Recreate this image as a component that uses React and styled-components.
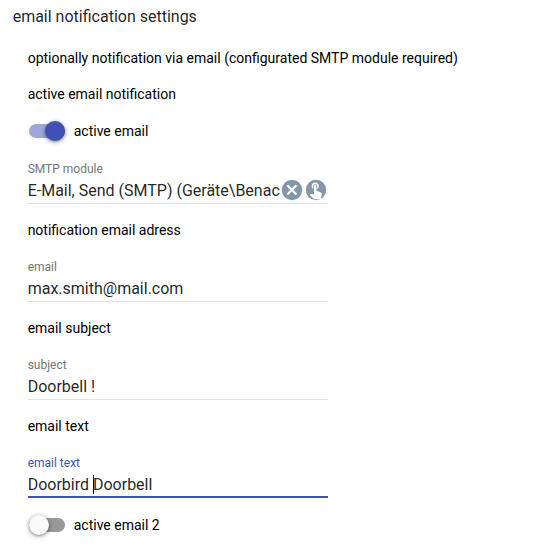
import React from "react";
import styled, { createGlobalStyle } from "styled-components";

const GlobalStyle = createGlobalStyle`
  body { margin: 0; background: #fff; font-family: Roboto, sans-serif; color: rgba(0,0,0,0.87); }
`;
const Page = styled.main`
  box-sizing: border-box;
  height: 547px;
  padding: 7px 0 0 27.65px;
  overflow: hidden;
`;
const Title = styled.h1`
  margin: 0 0 0 -15px;
  font-size: 16px;
  font-weight: 400;
  line-height: 20px;
`;
const Text = styled.p`
  margin: ${(p) => p.$top}px 0 0;
  font-size: 14px;
  line-height: 20px;
  color: #000;
`;
const SwitchRow = styled.label`
  display: flex;
  align-items: center;
  gap: 8.75px;
  height: 20px;
  margin-top: ${(p) => p.$top}px;
  font-size: 14px;
  color: #000;
`;
const Track = styled.span`
  box-sizing: border-box;
  display: flex;
  align-items: center;
  justify-content: ${(p) => (p.$on ? "flex-end" : "flex-start")};
  width: 36px;
  height: 14px;
  margin-left: 1.35px;
  border-radius: 8px;
  background: ${(p) => (p.$on ? "#9fa8da" : "#999")};
`;
const Thumb = styled.span`
  flex: none;
  width: 20px;
  height: 20px;
  border-radius: 50%;
  background: ${(p) => (p.$on ? "#3f51b5" : "#fafafa")};
  box-shadow: 0 1px 5px rgba(0,0,0,.4), 0 1px 2px rgba(0,0,0,.2);
`;
const Field = styled.div`
  box-sizing: border-box;
  width: 300px;
  height: 44px;
  margin-top: ${(p) => p.$top}px;
  padding-top: 1px;
  border-bottom: ${(p) => (p.$focused ? "2px solid #3f51b5" : "1px solid #e0e0e0")};
`;
const Label = styled.div`
  font-size: 12px;
  line-height: 16px;
  color: ${(p) => (p.$focused ? "#3f51b5" : "#757575")};
`;
const Value = styled.div`
  display: flex;
  align-items: center;
  height: 26px;
  font-size: 16px;
  white-space: nowrap;
`;
const Clip = styled.span`
  width: 252px;
  overflow: hidden;
`;
const Caret = styled.span`
  width: 1px;
  height: 19px;
  margin-right: -1px;
  background: #000;
`;
const Icon = styled.svg`
  flex: none;
  width: 24px;
  height: 24px;
  fill: #8397a9;
`;

function Switch({ on, top, children }) {
  return <SwitchRow $top={top}><Track $on={on}><Thumb $on={on} /></Track>{children}</SwitchRow>;
}
function InputField({ label, focused, top = 18, children }) {
  return <Field $top={top} $focused={focused}><Label $focused={focused}>{label}</Label><Value>{children}</Value></Field>;
}

export default function App() {
  return (
    <Page>
      <GlobalStyle />
      <Title>email notification settings</Title>
      <Text $top={21}>optionally notification via email (configurated SMTP module required)</Text>
      <Text $top={16}>active email notification</Text>
      <Switch on top={17}>active email</Switch>
      <InputField label="SMTP module" top={19}>
        <Clip>E-Mail, Send (SMTP) (Geräte\Benac</Clip>
        <Icon viewBox="0 0 24 24"><circle cx="12" cy="12" r="10.2" /><path d="m7.3 7.2 9.2 9.2m0-9.2-9.2 9.2" stroke="#fff" strokeWidth="2.1" /></Icon>
        <Icon viewBox="0 0 24 24"><circle cx="12" cy="12" r="10.2" /><path fill="#fff" transform="translate(2 2) scale(.8)" d="M9 11.24V7.5C9 6.12 10.12 5 11.5 5S14 6.12 14 7.5v3.74c1.21-.81 2-2.18 2-3.74C16 5.01 13.99 3 11.5 3S7 5.01 7 7.5c0 1.56.79 2.93 2 3.74zm9.84 4.63-4.54-2.26c-.17-.07-.35-.11-.54-.11H13v-6c0-.83-.67-1.5-1.5-1.5S10 6.67 10 7.5v10.74l-3.43-.72c-.08-.01-.15-.03-.24-.03-.31 0-.59.13-.79.33l-.79.8 4.94 4.94c.27.27.65.44 1.06.44h6.79c.75 0 1.33-.55 1.44-1.28l.75-5.27c.01-.07.02-.14.02-.2 0-.62-.38-1.16-.91-1.38z" /></Icon>
      </InputField>
      <Text $top={16}>notification email adress</Text>
      <InputField label="email">max.smith@mail.com</InputField>
      <Text $top={16}>email subject</Text>
      <InputField label="subject">Doorbell !</InputField>
      <Text $top={16}>email text</Text>
      <InputField label="email text" focused>Doorbird&nbsp;<Caret />Doorbell</InputField>
      <Switch top={17}>active email 2</Switch>
    </Page>
  );
}
